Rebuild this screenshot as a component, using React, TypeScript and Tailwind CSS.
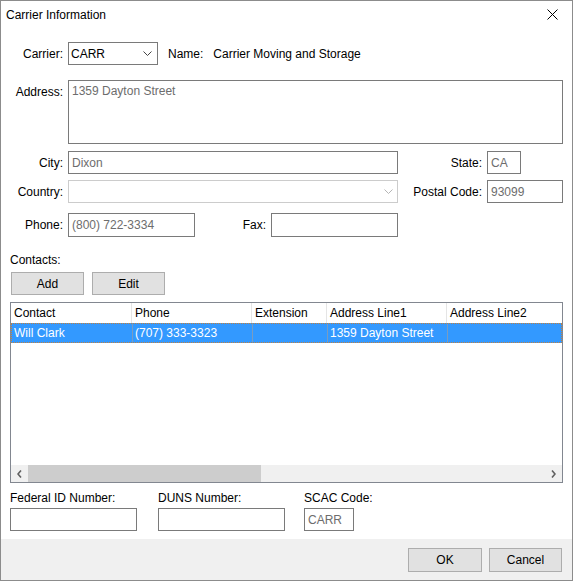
import React from 'react';

const Chevron: React.FC<{ color?: string }> = ({ color = '#444' }) => (
  <svg width="9" height="5" viewBox="0 0 9 5" className="shrink-0">
    <path d="M0.5 0.5 L4.5 4.5 L8.5 0.5" fill="none" stroke={color} strokeWidth="1" />
  </svg>
);

const Box: React.FC<{ w: string; value?: string; h?: string }> = ({ w, value, h = 'h-[23px]' }) => (
  <div className={`${w} ${h} border border-[#7a7a7a] bg-white flex items-center pl-[3px] text-[#6d6d6d] leading-none`}>
    {value}
  </div>
);

const cols = [
  { name: 'Contact', w: 'w-[121px]', v: 'Will Clark' },
  { name: 'Phone', w: 'w-[120px]', v: '(707) 333-3323' },
  { name: 'Extension', w: 'w-[75px]', v: '' },
  { name: 'Address Line1', w: 'w-[120px]', v: '1359 Dayton Street' },
  { name: 'Address Line2', w: 'w-[120px]', v: '' },
];

const App: React.FC = () => {
  return (
    <div className="w-[573px] h-[581px] border border-[#8c8c8c] bg-white flex flex-col font-['Liberation_Sans',Arial,sans-serif] text-[12px] text-black">
      {/* title bar */}
      <div className="h-[27px] flex items-center justify-between pl-[5px] pr-[14px]">
        <span>Carrier Information</span>
        <svg width="11" height="11" viewBox="0 0 11 11">
          <path d="M0.5 0.5 L10.5 10.5 M10.5 0.5 L0.5 10.5" stroke="#000" strokeWidth="1" />
        </svg>
      </div>

      <div className="flex-1 flex flex-col">
        {/* carrier row */}
        <div className="mt-[14px] h-[23px] flex items-center">
          <span className="w-[62px] text-right">Carrier:</span>
          <div className="ml-[5px] w-[90px] h-[23px] border border-[#7a7a7a] flex items-center justify-between pl-[2px] pr-[5px]">
            <span>CARR</span>
            <Chevron />
          </div>
          <span className="ml-[10px]">Name:</span>
          <span className="ml-[10px]">Carrier Moving and Storage</span>
        </div>

        {/* address */}
        <div className="mt-[15px] flex">
          <span className="w-[62px] text-right pt-[3px]">Address:</span>
          <div className="ml-[5px] w-[495px] h-[64px] border border-[#7a7a7a] pl-[3px] pt-[1px] text-[#6d6d6d]">
            1359 Dayton Street
          </div>
        </div>

        {/* city / state */}
        <div className="mt-[7px] flex items-center">
          <span className="w-[62px] text-right">City:</span>
          <div className="ml-[5px]"><Box w="w-[330px]" value="Dixon" /></div>
          <span className="ml-[51px] w-[33px] text-right">State:</span>
          <div className="ml-[5px]"><Box w="w-[34px]" value="CA" /></div>
        </div>

        {/* country / postal */}
        <div className="mt-[6px] flex items-center">
          <span className="w-[62px] text-right">Country:</span>
          <div className="ml-[5px] w-[330px] h-[23px] border border-[#cccccc] flex items-center justify-end pr-[4px]">
            <Chevron color="#b5b5b5" />
          </div>
          <span className="ml-[11px] w-[73px] text-right">Postal Code:</span>
          <div className="ml-[5px]"><Box w="w-[76px]" value="93099" /></div>
        </div>

        {/* phone / fax */}
        <div className="mt-[10px] flex items-center">
          <span className="w-[62px] text-right">Phone:</span>
          <div className="ml-[5px]"><Box w="w-[127px]" h="h-[24px]" value="(800) 722-3334" /></div>
          <span className="ml-[46px] w-[25px] text-right">Fax:</span>
          <div className="ml-[5px]"><Box w="w-[127px]" h="h-[24px]" /></div>
        </div>

        {/* contacts */}
        <div className="mt-[16px] ml-[9px] h-[14px] leading-[14px]">Contacts:</div>
        <div className="mt-[5px] ml-[10px] flex gap-[8px]">
          <button className="w-[73px] h-[23px] bg-[#e1e1e1] border border-[#adadad] leading-none">Add</button>
          <button className="w-[73px] h-[23px] bg-[#e1e1e1] border border-[#adadad] leading-none">Edit</button>
        </div>

        {/* grid */}
        <div className="mt-[7px] ml-[9px] w-[553px] h-[181px] border border-[#828790] flex flex-col overflow-hidden">
          <div className="flex h-[20px] shrink-0">
            {cols.map((c, i) => (
              <div
                key={c.name}
                className={`${c.w} shrink-0 flex items-center pl-[3px] ${i < cols.length - 1 ? 'border-r border-[#e5e5e5]' : ''}`}
              >
                {c.name}
              </div>
            ))}
          </div>
          <div className="flex h-[20px] shrink-0 bg-[#3399ff] text-white border border-dotted border-[#c08040]">
            {cols.map((c, i) => (
              <div
                key={c.name}
                className={`${c.w} shrink-0 flex items-center pl-[2px] ${i < cols.length - 1 ? 'border-r border-[#7a9cc0]' : ''} ${i === 0 ? 'w-[120px]' : ''}`}
              >
                {c.v}
              </div>
            ))}
          </div>
          <div className="flex-1" />
          <div className="h-[17px] bg-[#f0f0f0] flex items-center shrink-0">
            <div className="w-[17px] flex justify-center">
              <svg width="5" height="8" viewBox="0 0 5 8">
                <path d="M4 0.5 L1 4 L4 7.5" fill="none" stroke="#606060" strokeWidth="1.6" />
              </svg>
            </div>
            <div className="w-[233px] h-[17px] bg-[#cdcdcd]" />
            <div className="flex-1" />
            <div className="w-[17px] flex justify-center">
              <svg width="5" height="8" viewBox="0 0 5 8">
                <path d="M1 0.5 L4 4 L1 7.5" fill="none" stroke="#606060" strokeWidth="1.6" />
              </svg>
            </div>
          </div>
        </div>

        {/* bottom fields */}
        <div className="mt-[8px] ml-[9px] flex gap-[21px]">
          <div className="flex flex-col gap-[3px]">
            <span className="h-[14px] leading-[14px]">Federal ID Number:</span>
            <Box w="w-[127px]" />
          </div>
          <div className="flex flex-col gap-[3px]">
            <span className="h-[14px] leading-[14px]">DUNS Number:</span>
            <Box w="w-[127px]" />
          </div>
          <div className="flex flex-col gap-[3px] ml-[-2px]">
            <span className="h-[14px] leading-[14px]">SCAC Code:</span>
            <Box w="w-[50px]" value="CARR" />
          </div>
        </div>
      </div>

      {/* footer */}
      <div className="h-[41px] bg-[#f0f0f0] flex items-center justify-end gap-[7px] pr-[10px] shrink-0">
        <button className="w-[74px] h-[24px] bg-[#e1e1e1] border border-[#adadad] leading-none">OK</button>
        <button className="w-[73px] h-[24px] bg-[#e1e1e1] border border-[#adadad] leading-none">Cancel</button>
      </div>
    </div>
  );
};

export default App;
